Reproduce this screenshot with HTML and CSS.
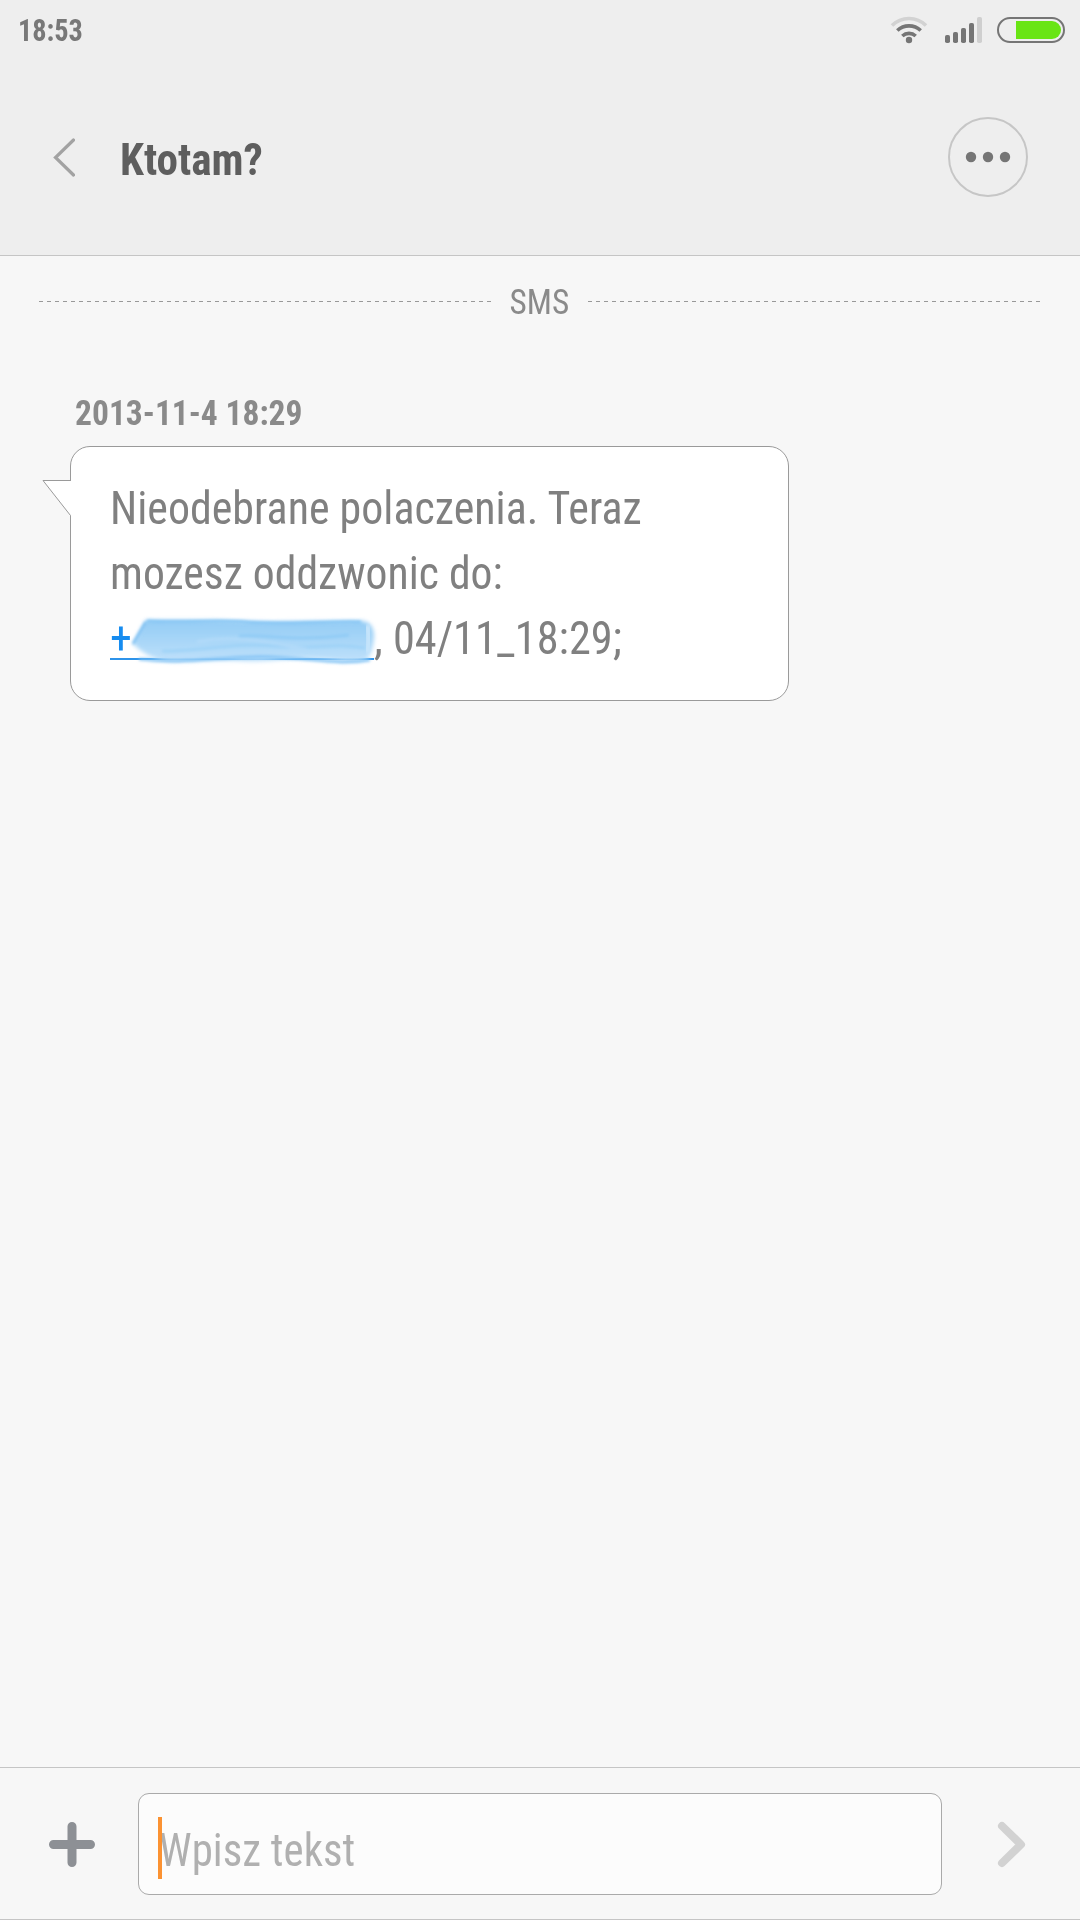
FILE: index.html
```html
<!DOCTYPE html>
<html lang="pl">
<head>
<meta charset="utf-8">
<title>Ktotam?</title>
<link rel="stylesheet" href="styles.css">
</head>
<body>
<div class="screen">
  <header class="header">
    <div class="status">
      <span class="clock">18:53</span>
      <svg class="status-icons" width="176" height="32" viewBox="0 0 176 32" fill="none">
        <g stroke="#757575" stroke-width="3.6">
          <path d="M3 11.5a24 24 0 0 1 34 0" stroke="#d2d2d2"/>
          <path d="M8.300 16.500a17 17 0 0 1 23.400 0"/>
          <path d="M13.300 22a10 10 0 0 1 13.400 0"/>
        </g>
        <circle cx="20" cy="26" r="3.200" fill="#757575"/>
        <g fill="#757575">
          <rect x="56" y="21" width="5" height="8" rx="1.800"/>
          <rect x="64" y="18" width="5" height="11" rx="1.800"/>
          <rect x="72" y="14" width="5" height="15" rx="1.800"/>
          <rect x="80" y="9" width="5" height="20" rx="1.800"/>
          <rect x="88" y="3" width="5" height="26" rx="1.800" fill="#cfcfcf"/>
        </g>
        <rect x="109" y="4" width="66" height="24" rx="12" stroke="#757575" stroke-width="2"/>
        <path d="M127 7h36a9 9 0 0 1 0 18h-36z" fill="#69e514"/>
      </svg>
    </div>
    <div class="titlebar">
      <svg class="back" width="24" height="40" viewBox="0 0 24 40"><path d="M22.500 3L4.500 20.500L22.500 38" fill="none" stroke="#a2a2a2" stroke-width="3.200" stroke-linecap="round"/></svg>
      <h1 class="title">Ktotam?</h1>
      <svg class="more" width="80" height="80" viewBox="0 0 80 80"><circle cx="40" cy="40" r="39" fill="none" stroke="#c6c6c6" stroke-width="2"/><g fill="#757575"><circle cx="23" cy="40" r="5.200"/><circle cx="40" cy="40" r="5.200"/><circle cx="57" cy="40" r="5.200"/></g></svg>
    </div>
  </header>
  <main class="thread">
    <div class="divider"><i class="dash"></i><span class="channel">SMS</span><i class="dash"></i></div>
    <time class="date">2013-11-4 18:29</time>
    <div class="bubble">
      <svg class="tail" width="30" height="38" viewBox="0 0 30 38"><path d="M30 1.500H1L28.500 36.500H30Z" fill="#fff"/><path d="M29 1.500H1L28.500 36.500" fill="none" stroke="#9a9a9a"/></svg>
      <p class="line"><span class="words">Nieodebrane polaczenia. Teraz</span></p>
      <p class="line"><span class="words words-tight">mozesz oddzwonic do:</span></p>
      <p class="line"><a class="phone"><span class="words">+</span><svg class="smudge" width="260" height="60" viewBox="0 0 260 60">
        <defs>
          <filter id="soft" x="-10%" y="-30%" width="120%" height="160%"><feGaussianBlur stdDeviation="2"/></filter>
          <filter id="streak" x="-10%" y="-200%" width="120%" height="500%"><feGaussianBlur stdDeviation="1.800"/></filter>
          <linearGradient id="paint" x1="0" y1="0" x2="0" y2="1"><stop offset="0" stop-color="#93ccf5"/><stop offset=".5" stop-color="#a8d6f8"/><stop offset="1" stop-color="#bfe1fa"/></linearGradient>
        </defs>
        <path d="M19 11C55 12 80 11 105 12C145 14 190 12 236 12Q247 14 247 28Q246 44 240 50C225 55 210 51 195 50C170 47 140 54 115 52C80 50 62 54 38 52Q20 49 6 35Z" fill="url(#paint)" filter="url(#soft)"/>
        <g fill="none" stroke-width="2.500" filter="url(#streak)">
          <path d="M20 12C65 14 90 10 120 13S200 12 234 13" stroke="#78bff3"/>
          <path d="M112 27C145 25 160 33 222 26" stroke="#8cc9f5"/>
          <path d="M35 42C75 42 110 33 148 37S205 33 238 39" stroke="#9bd1f7"/>
          <path d="M70 33C110 25 140 34 180 40" stroke="#b4dbf9"/>
          <path d="M12 50C60 56 100 46 145 48S210 56 243 51" stroke="#7cc0f4"/>
          <path d="M19 13L6 35" stroke="#74bcf2"/>
        </g>
        <path d="M240 16Q244 30 240 44" fill="none" stroke="#c5e4fb" stroke-width="7" filter="url(#streak)"/>
      </svg></a><span class="words words-wide">, 04/11_18:29;</span></p>
    </div>
  </main>
  <footer class="composer">
    <svg class="add" width="48" height="48" viewBox="0 0 48 48"><path d="M24 6.500V42.500M5.500 24.500H42.500" fill="none" stroke="#8d9095" stroke-width="9" stroke-linecap="round"/></svg>
    <div class="field"><span class="placeholder">Wpisz tekst</span><i class="caret"></i></div>
    <svg class="send" width="32" height="50" viewBox="0 0 32 50"><path d="M5 7L24 25.500L5 44" fill="none" stroke="#d2d2d2" stroke-width="8" stroke-linecap="round" stroke-linejoin="round"/></svg>
  </footer>
</div>
</body>
</html>
```
FILE: styles.css
```css
* { box-sizing: border-box; }
body { margin: 0; font-family: "Roboto Condensed", Roboto, sans-serif; font-stretch: 75%; background: #f7f7f7; }
.screen { width: 1080px; height: 1920px; display: flex; flex-direction: column; }
.header { height: 256px; background: #eee; border-bottom: 1px solid #c5c5c5; display: flex; flex-direction: column; }
.status { height: 60px; display: flex; justify-content: space-between; align-items: flex-start; padding: 14px 15px 0 18px; }
.clock { font-size: 31px; font-weight: 700; line-height: 34px; color: #787878; white-space: nowrap; transform: scaleX(.912); transform-origin: 0 50%; }
.titlebar { height: 194px; display: flex; align-items: center; padding: 0 52px 0 51px; }
.title { margin: 6px auto 0 45px; font-size: 44.500px; font-weight: 700; line-height: 60px; color: #5e5e5e; white-space: nowrap; transform: scaleX(.97); transform-origin: 0 50%; }
.thread { flex: 1; display: flex; flex-direction: column; align-items: flex-start; }
.divider { width: 1001px; height: 60px; margin: 15px 0 0 39px; display: flex; justify-content: space-between; align-items: center; }
.dash { width: 452px; height: 1px; background: repeating-linear-gradient(90deg, #999 0 4px, transparent 4px 8px); }
.channel { font-size: 35px; line-height: 56px; padding-top: 4px; color: #8a8a8a; transform: scaleX(.95); }
.date { margin: 61px 0 0 75px; font-size: 35px; font-weight: 700; line-height: 44px; color: #8a8a8a; white-space: nowrap; transform: scaleX(.958); transform-origin: 0 50%; }
.bubble { position: relative; width: 719px; height: 255px; margin: 10px 0 0 70px; padding: 28px 39px; background: #fff; border: 1px solid #9a9a9a; border-radius: 20px; }
.tail { position: absolute; left: -29px; top: 32px; }
.line { margin: 0; height: 65px; font-size: 47px; line-height: 65px; color: #808080; white-space: nowrap; display: flex; }
.words { transform: scaleX(.935); transform-origin: 0 50%; }
.words-tight { transform: scaleX(.929); }
.words-wide { transform: scaleX(.943); }
.phone { position: relative; width: 264px; height: 55px; display: flex; color: #168cf0; border-bottom: 2px solid #2d93ea; }
.smudge { position: absolute; left: 17px; top: 4px; }
.composer { height: 153px; border-top: 1px solid #c5c5c5; border-bottom: 1px solid #c5c5c5; display: flex; align-items: center; padding: 0 51px 0 48px; }
.field { position: relative; width: 804px; height: 102px; margin: 1px auto 0 42px; border: 1px solid #aaa; border-radius: 11px; background: #fcfcfc; padding: 16px 20px; }
.placeholder { display: block; font-size: 46.500px; line-height: 80px; color: #b0b0b0; white-space: nowrap; transform: scaleX(.922); transform-origin: 0 50%; }
.caret { position: absolute; left: 19px; top: 23px; width: 4px; height: 62px; background: #fb9232; }
```
